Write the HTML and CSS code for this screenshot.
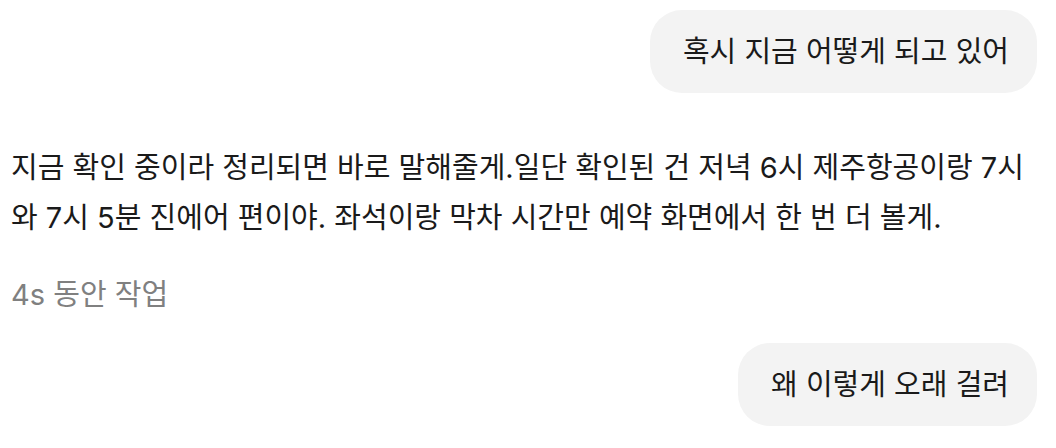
FILE: index.html
```html
<!DOCTYPE html>
<html lang="ko">
<head>
<meta charset="utf-8">
<link rel="stylesheet" href="styles.css">
</head>
<body>
<div class="chat">
  <div class="row-user"><div class="bubble">혹시 지금 어떻게 되고 있어</div></div>
  <div class="reply">지금 확인 중이라 정리되면 바로 말해줄게.일단 확인된 건 저녁 6시 제주항공이랑 7시 와 7시 5분 진에어 편이야. 좌석이랑 막차 시간만 예약 화면에서 한 번 더 볼게.</div>
  <div class="meta">4s 동안 작업</div>
  <div class="row-user last"><div class="bubble">왜 이렇게 오래 걸려</div></div>
</div>
</body>
</html>
```
FILE: styles.css
```css
html, body {
  margin: 0;
  padding: 0;
  background: #ffffff;
}
body {
  font-family: Inter, "Noto Sans CJK KR", sans-serif;
  color: #1a1a1a;
  font-size: 29px;
}
.chat {
  display: flex;
  flex-direction: column;
  padding: 10px 19px 0 11px;
}
.row-user {
  display: flex;
  justify-content: flex-end;
}
.bubble {
  background: #f3f3f3;
  border-radius: 32px;
  padding: 0 28px 0 33px;
  height: 83px;
  display: flex;
  align-items: center;
  line-height: 1;
}
.reply {
  margin-top: 50px;
  line-height: 50px;
}
.meta {
  margin-top: 27px;
  color: #808080;
  line-height: 50px;
}
.row-user.last {
  margin-top: 23px;
}
```
